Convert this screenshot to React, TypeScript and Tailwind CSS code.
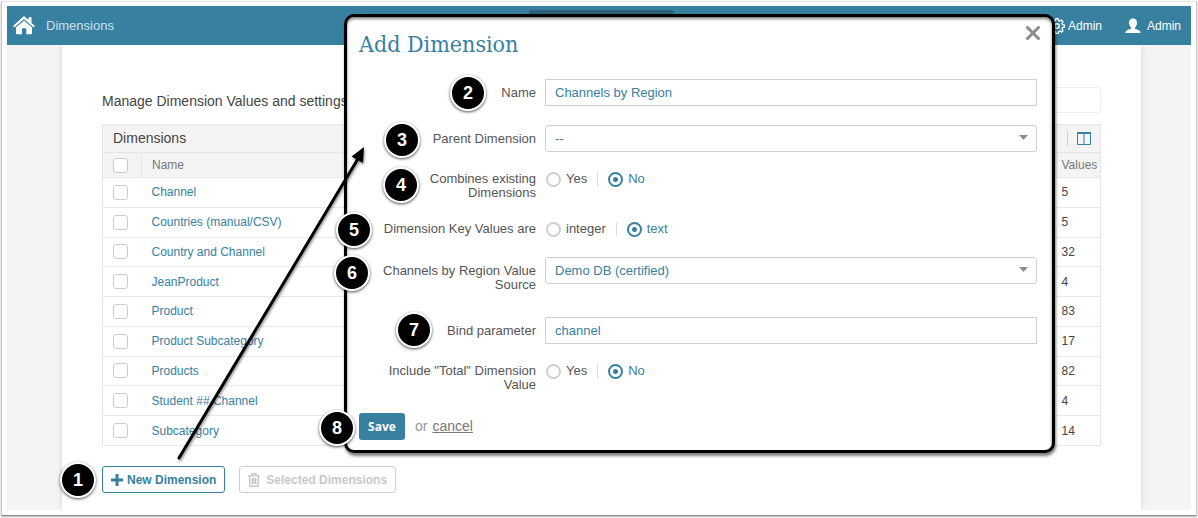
import React from 'react';

const rows = [
  { name: 'Channel', values: 5 },
  { name: 'Countries (manual/CSV)', values: 5 },
  { name: 'Country and Channel', values: 32 },
  { name: 'JeanProduct', values: 4 },
  { name: 'Product', values: 83 },
  { name: 'Product Subcategory', values: 17 },
  { name: 'Products', values: 82 },
  { name: 'Student ## Channel', values: 4 },
  { name: 'Subcategory', values: 14 },
];

const steps = [
  { n: 1, pos: 'left-[60px] top-[462px]' },
  { n: 2, pos: 'left-[450px] top-[75px]' },
  { n: 3, pos: 'left-[384px] top-[122px]' },
  { n: 4, pos: 'left-[383px] top-[167px]' },
  { n: 5, pos: 'left-[336px] top-[212px]' },
  { n: 6, pos: 'left-[334px] top-[255px]' },
  { n: 7, pos: 'left-[396px] top-[312px]' },
  { n: 8, pos: 'left-[319px] top-[410px]' },
];

function HomeIcon() {
  return (
    <svg className="w-[22px] h-[19px] fill-white" viewBox="0 0 22 19" aria-hidden="true">
      <path d="M11 0 L15.5 4.1 V1.2 H18.5 V6.9 L22 10.1 L20.6 11.6 L11 2.9 L1.4 11.6 L0 10.1 Z" />
      <path d="M11 4.4 L19 11.6 V17.3 Q19 18.3 18 18.3 H13.3 V12.2 H9 V18.3 H4 Q3 18.3 3 17.3 V11.6 Z" />
    </svg>
  );
}

function GearIcon() {
  return (
    <svg className="w-4 h-4" viewBox="0 0 24 24" fill="none" stroke="white" strokeWidth={2} aria-hidden="true">
      <circle cx="12" cy="12" r="3.4" />
      <path d="M10.3 1.5h3.4l.6 3 2.2.9 2.6-1.7 2.4 2.4-1.7 2.6.9 2.2 3 .6v3.4l-3 .6-.9 2.2 1.7 2.6-2.4 2.4-2.6-1.7-2.2.9-.6 3h-3.4l-.6-3-2.2-.9-2.6 1.7-2.4-2.4 1.7-2.6-.9-2.2-3-.6v-3.4l3-.6.9-2.2-1.7-2.6 2.4-2.4 2.6 1.7 2.2-.9z" transform="translate(.6 -.4) scale(.95)" />
    </svg>
  );
}

function UserIcon() {
  return (
    <svg className="w-4 h-4 fill-white" viewBox="0 0 16 16" aria-hidden="true">
      <path d="M8 0.5C10.6 0.5 12 2.2 12 4.8C12 7 11 8.6 10 9.5V10.7C12.5 11.6 15.5 12.3 15.7 15H0.3C0.5 12.3 3.5 11.6 6 10.7V9.5C5 8.6 4 7 4 4.8C4 2.2 5.4 0.5 8 0.5Z" />
    </svg>
  );
}

function ColumnsIcon() {
  return (
    <svg className="w-[14px] h-[13px]" viewBox="0 0 14 13" fill="none" stroke="#3880a0" aria-hidden="true">
      <path d="M.5 1h13v11.500H.5zM7 1v11.500" />
      <path d="M0 1h14" strokeWidth={2} />
    </svg>
  );
}

function TrashIcon() {
  return (
    <svg className="w-3 h-[14px]" viewBox="0 0 12 14" fill="none" stroke="#c4c4c4" strokeWidth={1.4} aria-hidden="true">
      <path d="M0 2.900h12M4 2.500V.8h4v1.700M1.500 3l.5 10.300h8l.5-10.300M4.300 5v6.300M6 5v6.300M7.700 5v6.300" />
    </svg>
  );
}

type FieldProps = { id: string; value: string };

function SelectField({ id, value }: FieldProps) {
  return (
    <div className="relative flex-1">
      <select
        id={id}
        className="block w-full h-[27px] appearance-none rounded-[3px] border border-[#d0d0d0] bg-white pl-[9px] pr-6 text-[13px] text-[#3880a0]"
      >
        <option>{value}</option>
      </select>
      <svg className="pointer-events-none absolute right-[9px] top-[10px] w-[9px] h-[5px] fill-[#8c8c8c]" viewBox="0 0 9 5" aria-hidden="true">
        <path d="M0 0h9L4.500 5z" />
      </svg>
    </div>
  );
}

function TextField({ id, value }: FieldProps) {
  return (
    <input
      id={id}
      type="text"
      defaultValue={value}
      className="flex-1 h-[27px] border border-[#d0d0d0] bg-white px-[9px] text-[13px] text-[#3880a0]"
    />
  );
}

type RadioPairProps = { name: string; label: string; options: [string, string] };

/** Two radios with a thin divider, the second one is on by default */
function RadioPair({ name, label, options }: RadioPairProps) {
  const radio =
    'appearance-none w-[15px] h-[15px] rounded-full border-2 border-[#cfcfcf] bg-white checked:border-[#3880a0] checked:bg-[radial-gradient(circle,#3880a0_0,#3880a0_2px,white_3px)]';
  return (
    <div role="radiogroup" aria-label={label} className="flex h-[14px] items-center">
      <label className="flex items-center gap-[5px] text-[#555]">
        <input type="radio" name={name} className={radio} />
        {options[0]}
      </label>
      <span className="mx-[10px] h-[14px] w-px bg-[#ddd]" />
      <label className="flex items-center gap-[5px] text-[#3880a0]">
        <input type="radio" name={name} defaultChecked className={radio} />
        {options[1]}
      </label>
    </div>
  );
}

const labelClass = 'w-[177px] shrink-0 text-right leading-[14px] text-[#555]';

function AddDimensionDialog() {
  return (
    <form
      role="dialog"
      aria-labelledby="dialog-title"
      className="absolute left-[344px] right-[143px] top-[14px] rounded-[10px] border-[3px] border-black bg-white pl-3 pr-[15px] pb-[10px] text-[13px] shadow-[1px_3px_3px_rgba(0,0,0,0.5),inset_0_2px_3px_rgba(0,0,0,0.5)]"
    >
      <div className="flex items-start justify-between pt-[9px]">
        <h2
          id="dialog-title"
          className="font-['DejaVu_Serif_Condensed','DejaVu_Serif',serif] text-[23px] leading-[36px] text-[#3880a0]"
        >
          Add Dimension
        </h2>
        <button type="button" aria-label="Close" className="-mr-1">
          <svg className="w-4 h-[14px]" viewBox="0 0 16 14" stroke="#8c8c8c" strokeWidth={3} strokeLinecap="round" aria-hidden="true">
            <path d="M2.500 1.500l11 11M13.500 1.500l-11 11" />
          </svg>
        </button>
      </div>

      <div className="mt-[17px] flex items-center gap-[9px]">
        <label htmlFor="name" className={labelClass}>Name</label>
        <TextField id="name" value="Channels by Region" />
      </div>
      <div className="mt-[19px] flex items-center gap-[9px]">
        <label htmlFor="parent" className={labelClass}>Parent Dimension</label>
        <SelectField id="parent" value="--" />
      </div>
      <div className="mt-5 flex gap-[10px]">
        <span className={labelClass}>Combines existing<br />Dimensions</span>
        <RadioPair name="combines" label="Combines existing Dimensions" options={['Yes', 'No']} />
      </div>
      <div className="mt-[22px] flex gap-[10px]">
        <span className={labelClass}>Dimension Key Values are</span>
        <RadioPair name="keys" label="Dimension Key Values are" options={['integer', 'text']} />
      </div>
      <div className="mt-[21px] flex items-start gap-[9px]">
        <label htmlFor="source" className={`${labelClass} pt-[7px]`}>Channels by Region Value Source</label>
        <SelectField id="source" value="Demo DB (certified)" />
      </div>
      <div className="mt-[25px] flex items-center gap-[9px]">
        <label htmlFor="bind" className={labelClass}>Bind parameter</label>
        <TextField id="bind" value="channel" />
      </div>
      <div className="mt-5 flex gap-[10px]">
        <span className={labelClass}>Include "Total" Dimension Value</span>
        <RadioPair name="total" label={'Include "Total" Dimension Value'} options={['Yes', 'No']} />
      </div>

      <div className="mt-[21px] flex items-center text-[14px] text-[#999]">
        <button
          type="button"
          className="h-[27px] w-[46px] rounded-[3px] bg-[#3880a0] font-['Open_Sans',sans-serif] text-[12px] font-bold text-white"
        >
          Save
        </button>
        <span className="ml-[10px]">or</span>
        <a href="#" className="ml-[5px] text-[#777] underline">cancel</a>
      </div>
    </form>
  );
}

export default function App() {
  const box = 'block appearance-none w-[15px] h-[15px] rounded-[3px] border border-[#ccc] bg-white';
  return (
    <div className="h-screen bg-white pl-px pr-px pt-px pb-[2px] font-['Liberation_Sans',Arial,sans-serif]">
      <div className="relative h-full border border-[#c8c8c8] border-t-[#e6e6e6] border-b-[#8a8a8a] bg-white px-[5px] pt-1 pb-[5px] shadow-[0_1px_2px_rgba(0,0,0,0.3)]">
        <div className="flex h-full flex-col bg-[#f4f4f4]">
          <header className="relative flex h-[39px] shrink-0 items-center bg-[#3880a0] pl-[6px] pr-[10px] text-white">
            <HomeIcon />
            <a href="#" className="ml-[11px] text-[13px] text-[#c9e2ee]">Dimensions</a>
            <div className="absolute left-[522px] top-1 h-6 w-[145px] rounded-[3px] bg-[#2b6079]" />
            <a href="#" className="ml-auto flex items-center gap-[3px] text-[12px]">
              <GearIcon />
              Admin
            </a>
            <a href="#" className="ml-[23px] flex items-center gap-[6px] text-[12px]">
              <UserIcon />
              Admin
            </a>
          </header>

          <main className="ml-[55px] mr-[50px] flex-1 bg-white px-10 pt-[42px] shadow-[0_0_6px_rgba(0,0,0,0.12)] [clip-path:inset(0_-8px)]">
            <div className="flex items-center justify-between">
              <p className="pt-[3px] text-[14px] text-[#444]">Manage Dimension Values and settings</p>
              <input type="search" aria-label="Search" className="h-[26px] w-[200px] rounded-[3px] border border-[#eee]" />
            </div>

            <div className="mt-[11px] border border-[#e6e6e6] border-b-0 bg-[#f4f4f4]">
              <div className="flex h-[27px] items-center justify-between pl-[10px] pr-[9px]">
                <h1 className="text-[14px] text-[#444]">Dimensions</h1>
                <button type="button" aria-label="Columns" className="flex h-[15px] items-center border-l border-[#d0d0d0] pl-[9px]">
                  <ColumnsIcon />
                </button>
              </div>
            </div>
            <table className="h-[294px] w-full table-fixed border-collapse border border-[#e6e6e6] text-left text-[12px]">
              <thead className="bg-[#f4f4f4] text-[#777]">
                <tr className="h-[25px]">
                  <th className="w-[39px] border-r border-[#e6e6e6] pl-[10px]">
                    <input type="checkbox" aria-label="Select all" className={`${box} bg-transparent`} />
                  </th>
                  <th className="pl-[10px] font-normal">Name</th>
                  <th className="w-[39px] font-normal">Values</th>
                </tr>
              </thead>
              <tbody>
                {rows.map(r => (
                  <tr key={r.name} className="h-[29px] border-t border-[#e9e9e9]">
                    <td className="pl-[10px]">
                      <input type="checkbox" aria-label={r.name} className={box} />
                    </td>
                    <td className="pl-[10px]">
                      <a href="#" className="text-[#3880a0]">{r.name}</a>
                    </td>
                    <td className="text-[#444]">{r.values}</td>
                  </tr>
                ))}
              </tbody>
            </table>

            <div className="mt-5 flex gap-[14px] text-[12px] font-bold">
              <button
                type="button"
                className="flex h-[27px] items-center gap-[4px] rounded-[3px] border border-[#3880a0] px-2 text-[#3880a0]"
              >
                <svg className="w-3 h-3" viewBox="0 0 12 12" stroke="currentColor" strokeWidth={3} aria-hidden="true">
                  <path d="M6 0v12M0 6h12" />
                </svg>
                New Dimension
              </button>
              <button
                type="button"
                disabled
                className="flex h-[27px] items-center gap-[6px] rounded-[3px] border border-[#d0d0d0] px-2 text-[#c8c8c8]"
              >
                <TrashIcon />
                Selected Dimensions
              </button>
            </div>
          </main>
        </div>
      </div>

      <AddDimensionDialog />

      {/* Arrow from the New Dimension button to the dialog */}
      <svg
        className="pointer-events-none absolute left-[170px] top-[140px] h-[330px] w-[210px] drop-shadow-[1px_2px_1px_rgba(0,0,0,0.4)]"
        viewBox="170 140 210 330"
        aria-hidden="true"
      >
        <path d="M179 458L359 157" stroke="black" strokeWidth={3} strokeLinecap="round" />
        <path d="M364 147L363 163L351.500 156.500Z" />
      </svg>

      {steps.map(s => (
        <span
          key={s.n}
          className={`absolute flex h-9 w-9 items-center justify-center rounded-full border-2 border-white bg-black text-[18px] font-bold text-white shadow-[0_1px_3px_rgba(0,0,0,0.7)] ${s.pos}`}
        >
          {s.n}
        </span>
      ))}
    </div>
  );
}
